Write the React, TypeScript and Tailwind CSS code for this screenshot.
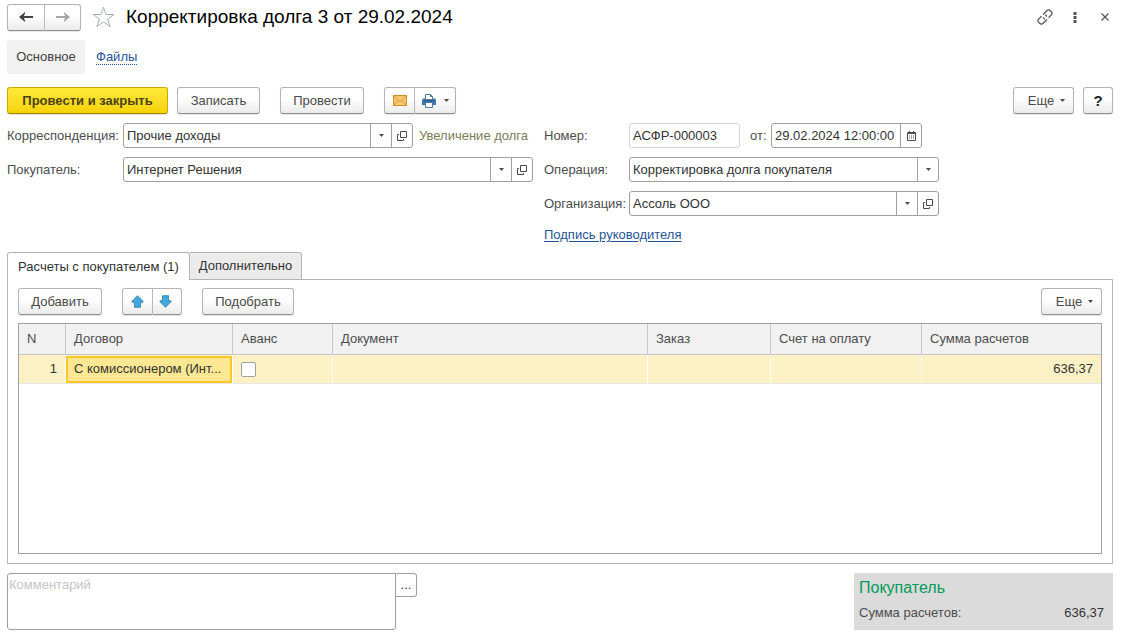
import type { ReactNode } from 'react'

const COLUMNS = [
  { title: 'N', width: 'w-[47px]' },
  { title: 'Договор', width: 'w-[167px]' },
  { title: 'Аванс', width: 'w-[100px]' },
  { title: 'Документ', width: '' },
  { title: 'Заказ', width: 'w-[123px]' },
  { title: 'Счет на оплату', width: 'w-[151px]' },
  { title: 'Сумма расчетов', width: 'w-[179px]' },
]

const BUTTON =
  'h-[27px] flex items-center justify-center border border-[#b3b3b3] border-b-[#8f8f8f] bg-gradient-to-b from-white from-40% to-[#ebebeb] text-[#4a4a4a] shadow-[0_1px_1px_#e4e4e4]'

const FIELD = 'h-[25px] flex border border-[#a0a0a0] rounded-[3px] bg-white overflow-hidden text-[#333]'

const CELL = 'border-r border-r-white border-b border-b-[#e6e6e6] bg-[#fcf1c5] last:border-r-0'

function Caret() {
  return (
    <svg className="w-[5px] h-[3px] shrink-0" viewBox="0 0 5 3" fill="#4a4a4a">
      <path d="M0 0h5L2.5 3z" />
    </svg>
  )
}

function OpenIcon() {
  return (
    <svg className="w-[10px] h-[10px]" viewBox="0 0 10 10" fill="none" stroke="#4a4a4a">
      <path d="M3.5.5h6v6h-6zM2 3.5H.5v6h6V8" />
    </svg>
  )
}

function BackArrow({ color }: { color: string }) {
  return (
    <svg className="w-[14px] h-[10px]" viewBox="0 0 14 10" fill={color}>
      <path d="M0 5l6-5v1.500L4.800 4H14v2H4.800L6 8.500V10z" />
    </svg>
  )
}

function BlueArrow({ down }: { down?: boolean }) {
  return (
    <svg className={`w-[13px] h-[13px] ${down ? 'rotate-180' : ''}`} viewBox="0 0 13 13">
      <path d="M6.500.7l5.500 5.600v.9H9.500v5.100h-6V7.200H1v-.9z" fill="#43a9e0" stroke="#2b7cab" strokeWidth=".8" />
    </svg>
  )
}

function OpenButton({ label }: { label: string }) {
  return (
    <button aria-label={label} className="w-[21px] shrink-0 border-l border-[#a0a0a0] flex items-center justify-center">
      <OpenIcon />
    </button>
  )
}

function SelectField({ id, value, width, open }: { id: string; value: string; width: string; open?: boolean }) {
  return (
    <div className={`${FIELD} ${width}`}>
      <div className="relative flex-1 min-w-0">
        <select id={id} className="appearance-none w-full h-full pl-[3px] pr-6 bg-transparent outline-none">
          <option>{value}</option>
        </select>
        <span className="absolute inset-y-0 right-0 w-[21px] border-l border-[#a0a0a0] flex items-center justify-center pointer-events-none">
          <Caret />
        </span>
      </div>
      {open && <OpenButton label="Открыть" />}
    </div>
  )
}

function Label({ id, width, children }: { id: string; width: string; children: ReactNode }) {
  return (
    <label htmlFor={id} className={`${width} shrink-0 text-[#4d4d4d] whitespace-nowrap`}>
      {children}
    </label>
  )
}

function MoreButton() {
  return (
    <button className={`${BUTTON} w-[61px] gap-[6px] pl-[6px] rounded-[3px]`}>
      Еще
      <Caret />
    </button>
  )
}

export default function App() {
  return (
    <div className="min-h-screen flex flex-col bg-white pl-[7px] pr-[11px] pt-1 pb-[7px] font-['Liberation_Sans',Arial,sans-serif] text-[13px] leading-4">
      <header className="flex items-center h-[26px]">
        <div className="flex">
          <button aria-label="Назад" className={`${BUTTON} w-[38px] rounded-l-[3px]`}>
            <BackArrow color="#404040" />
          </button>
          <button aria-label="Вперед" className={`${BUTTON} w-[36px] border-l-0 rounded-r-[3px]`}>
            <span className="rotate-180">
              <BackArrow color="#a6a6a6" />
            </span>
          </button>
        </div>
        <button aria-label="В избранное" className="ml-[11px]">
          <svg className="w-[23px] h-[22px]" viewBox="0 0 23 22" fill="none" stroke="#a9aeb3">
            <path d="M11.500 1.200l2.500 7.300h7.800l-6.200 4.500 2.500 7.600-6.600-4.700-6.600 4.700L7.400 13 1.200 8.500H9z" />
          </svg>
        </button>
        <h1 className="ml-[11px] text-[19px] leading-6 text-black">Корректировка долга 3 от 29.02.2024</h1>
        <div className="ml-auto flex items-center">
          <button aria-label="Ссылка">
            <svg className="w-4 h-4" viewBox="0 0 16 16" fill="none" stroke="#555" strokeWidth="1.3">
              <path d="M6 5.500l3.800-3.800a2.500 2.500 0 0 1 3.500 0l.9.900a2.500 2.500 0 0 1 0 3.500L11.500 8.800M10 10.500l-3.800 3.800a2.500 2.500 0 0 1-3.500 0l-.9-.900a2.500 2.500 0 0 1 0-3.500L4.500 7.200M6 8.500L7.800 10.200M8.200 5.800L10 7.500" />
            </svg>
          </button>
          <button aria-label="Меню" className="ml-5">
            <svg className="w-[4px] h-[11px]" viewBox="0 0 4 11" fill="#555">
              <path d="M.5 0h3v3h-3zM.5 4h3v3h-3zM.5 8h3v3h-3z" />
            </svg>
          </button>
          <button aria-label="Закрыть" className="ml-6 mr-[4px]">
            <svg className="w-[8px] h-[8px]" viewBox="0 0 8 8" fill="none" stroke="#555" strokeWidth="1.200">
              <path d="M.5.5l7 7M7.500.5l-7 7" />
            </svg>
          </button>
        </div>
      </header>

      <nav className="mt-[10px] flex items-center">
        <a href="#main" className="h-[34px] w-[78px] flex items-center justify-center bg-[#f1f1f1] rounded-[3px] text-[#404040]">
          Основное
        </a>
        <a href="#files" className="ml-[11px] leading-[14px] text-[#1f5496] border-b border-dotted border-[#1f5496]">
          Файлы
        </a>
      </nav>

      <div className="mt-[13px] flex">
        <button className="h-[27px] w-[161px] rounded-[3px] border border-[#c9a800] border-b-[#9d8600] bg-gradient-to-b from-[#ffe937] to-[#f6d200] font-bold text-[#4a4216] shadow-[0_1px_1px_#e4e4e4]">
          Провести и закрыть
        </button>
        <button className={`${BUTTON} ml-[9px] w-[83px] rounded-[3px]`}>Записать</button>
        <button className={`${BUTTON} ml-5 w-[84px] rounded-[3px]`}>Провести</button>
        <div className="ml-5 flex">
          <button aria-label="Отправить" className={`${BUTTON} w-[31px] rounded-l-[3px]`}>
            <svg className="w-[14px] h-[11px]" viewBox="0 0 14 11" fill="#fbc869" stroke="#d18c2a">
              <path d="M.5.5h13v10H.5z" />
              <path d="M.5.5L7 6.500l6.500-6M.5 10.500L5.300 5M13.500 10.500L8.700 5" fill="none" strokeWidth=".8" />
            </svg>
          </button>
          <button aria-label="Печать" className={`${BUTTON} w-[41px] gap-[8px] border-l-0 rounded-r-[3px]`}>
            <svg className="w-[14px] h-[14px]" viewBox="0 0 14 14">
              <path d="M1 4.500h12l1 1V11H0V5.500z" fill="#3d76ad" />
              <path d="M3.500 5.500v-5h5l2 2v3zM3.500 8.500h7v5h-7z" fill="#fff" stroke="#52779b" />
              <path d="M8.500.5v2h2" fill="none" stroke="#52779b" />
              <path d="M2 7h10" stroke="#23527f" />
            </svg>
            <Caret />
          </button>
        </div>
        <div className="ml-auto flex gap-[9px]">
          <MoreButton />
          <button aria-label="Справка" className={`${BUTTON} w-[30px] rounded-[3px]`}>
            <b className="text-[15px] text-[#222]">?</b>
          </button>
        </div>
      </div>

      <div className="mt-[9px] flex gap-[11px]">
        <div className="flex flex-col gap-[9px]">
          <div className="flex items-center">
            <Label id="account" width="w-[116px]">Корреспонденция:</Label>
            <SelectField id="account" value="Прочие доходы" width="w-[290px]" open />
            <span className="ml-[6px] text-[#7b7b57]">Увеличение долга</span>
          </div>
          <div className="flex items-center">
            <Label id="buyer" width="w-[116px]">Покупатель:</Label>
            <SelectField id="buyer" value="Интернет Решения" width="w-[410px]" open />
          </div>
        </div>

        <div className="flex flex-col gap-[9px]">
          <div className="flex items-center">
            <Label id="number" width="w-[85px]">Номер:</Label>
            <input
              id="number"
              defaultValue="АСФР-000003"
              className="h-[25px] w-[111px] px-[3px] border border-[#d4d4d4] rounded-[3px] text-[#333] outline-none"
            />
            <label htmlFor="date" className="w-[31px] pl-[10px] text-[#4d4d4d]">от:</label>
            <div className={`${FIELD} w-[151px]`}>
              <input id="date" defaultValue="29.02.2024 12:00:00" className="flex-1 min-w-0 pl-[3px] outline-none" />
              <button aria-label="Выбрать дату" className="w-[21px] border-l border-[#a0a0a0] flex items-center justify-center">
                <svg className="w-[9px] h-[10px]" viewBox="0 0 9 10" fill="none" stroke="#4a4a4a">
                  <path d="M.5 1.500h8v8h-8zM0 2.500h9M2.500 0v2M6.500 0v2" />
                  <path d="M2 5h5M2 7h5" strokeDasharray="1 1" />
                </svg>
              </button>
            </div>
          </div>
          <div className="flex items-center">
            <Label id="operation" width="w-[85px]">Операция:</Label>
            <SelectField id="operation" value="Корректировка долга покупателя" width="w-[310px]" />
          </div>
          <div className="flex items-center">
            <Label id="company" width="w-[85px]">Организация:</Label>
            <SelectField id="company" value="Ассоль ООО" width="w-[310px]" open />
          </div>
          <a href="#sign" className="self-start mt-[2px] text-[#1f5496] underline underline-offset-2">
            Подпись руководителя
          </a>
        </div>
      </div>

      <div role="tablist" className="relative mt-[9px] -mb-px flex items-end">
        <button role="tab" aria-selected="true" className="h-7 w-[183px] border border-b-0 border-[#b3b3b3] rounded-t-[3px] bg-white text-[#333]">
          Расчеты с покупателем (1)
        </button>
        <button role="tab" aria-selected="false" className="h-7 w-[112px] border border-l-0 border-[#b3b3b3] rounded-tr-[3px] bg-[#ebebeb] text-[#333]">
          Дополнительно
        </button>
      </div>

      <section className="flex-1 flex flex-col border border-[#b3b3b3] px-[10px] pt-[8px] pb-[9px]">
        <div className="flex">
          <button className={`${BUTTON} w-[84px] rounded-[3px]`}>Добавить</button>
          <div className="ml-5 flex">
            <button aria-label="Вверх" className={`${BUTTON} w-[31px] rounded-l-[3px]`}>
              <BlueArrow />
            </button>
            <button aria-label="Вниз" className={`${BUTTON} w-[29px] pr-[3px] border-l-0 rounded-r-[3px]`}>
              <BlueArrow down />
            </button>
          </div>
          <button className={`${BUTTON} ml-5 w-[92px] rounded-[3px]`}>Подобрать</button>
          <div className="ml-auto">
            <MoreButton />
          </div>
        </div>

        <div className="mt-2 flex-1 border border-[#a0a0a0]">
          <table className="w-full table-fixed border-separate border-spacing-0">
            <thead>
              <tr className="h-[31px]">
                {COLUMNS.map((col) => (
                  <th
                    key={col.title}
                    className={`${col.width} px-2 text-left font-normal text-[#4d4d4d] bg-[#f1f1f1] border-r border-b border-[#c6c6c6] last:border-r-0`}
                  >
                    {col.title}
                  </th>
                ))}
              </tr>
            </thead>
            <tbody className="text-[#333]">
              <tr className="h-[29px]">
                <td className={`${CELL} px-2 text-right`}>1</td>
                <td className={CELL}>
                  <div className="h-[27px] px-[6px] flex items-center border-2 border-[#f9c728] bg-[#fde792] whitespace-nowrap">
                    С комиссионером (Инт...
                  </div>
                </td>
                <td className={`${CELL} px-2`}>
                  <input
                    type="checkbox"
                    aria-label="Аванс"
                    className="block appearance-none w-[15px] h-[15px] bg-white border border-[#a0a0a0] rounded-[2px]"
                  />
                </td>
                <td className={CELL} />
                <td className={CELL} />
                <td className={CELL} />
                <td className={`${CELL} px-2 text-right`}>636,37</td>
              </tr>
            </tbody>
          </table>
        </div>
      </section>

      <footer className="mt-[9px] flex items-start">
        <textarea
          aria-label="Комментарий"
          placeholder="Комментарий"
          className="block w-[389px] h-[57px] px-px py-[3px] border border-[#a0a0a0] rounded-[3px] rounded-tr-none resize-none outline-none placeholder:text-[#c4c4c4]"
        />
        <button aria-label="Изменить комментарий" className="h-6 w-[21px] border border-l-0 border-[#a0a0a0] rounded-r-[3px] text-[#333]">
          ...
        </button>
        <div className="ml-auto w-[259px] h-[57px] pl-[5px] pr-[9px] pt-[5px] bg-[#dbdbdb]">
          <h2 className="text-[16px] leading-5 text-[#009a5a]">Покупатель</h2>
          <div className="mt-[7px] flex justify-between text-[#4d4d4d]">
            <span>Сумма расчетов:</span>
            <span className="text-[#333]">636,37</span>
          </div>
        </div>
      </footer>
    </div>
  )
}
